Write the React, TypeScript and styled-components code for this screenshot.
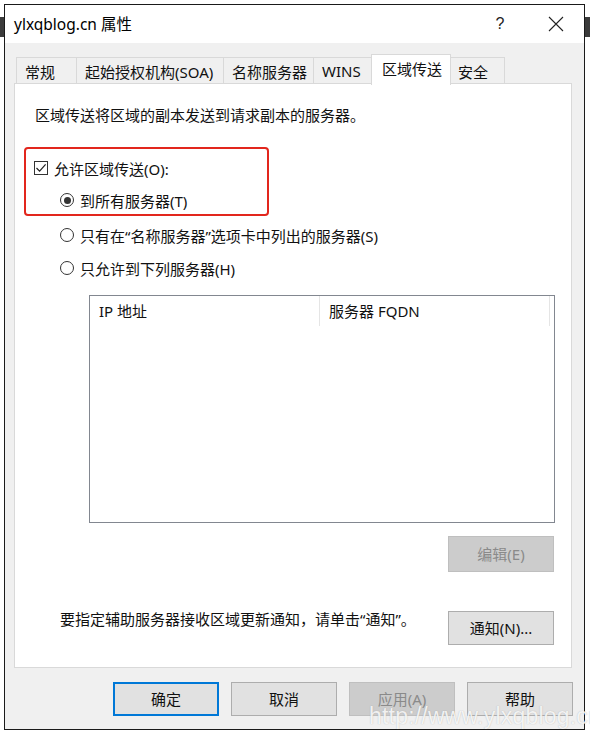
import styled, { createGlobalStyle } from "styled-components";

const GlobalStyle = createGlobalStyle`
    html, body {
        margin: 0;
        padding: 0;
    }
    body {
        width: 590px;
        height: 733px;
        overflow: hidden;
        font-family: "Noto Sans", "Noto Sans CJK SC", sans-serif;
        color: #111;
        background: linear-gradient(to bottom, #ffffff 17px, #3b3b3b 17px, #3b3b3b 37px, #ffffff 37px);
    }
`;

const tabs = [
    { label: "常规", width: 61 },
    { label: "起始授权机构(SOA)", width: 148 },
    { label: "名称服务器", width: 91 },
    { label: "WINS", width: 60 },
    { label: "区域传送", width: 80 },
    { label: "安全", width: 56 },
];
const activeTab = "区域传送";

const Dialog = () => {
    return (
        <Page>
            <GlobalStyle />
            <Window>
                <TitleBar>
                    <Title>ylxqblog.cn 属性</Title>
                    <CaptionButton>?</CaptionButton>
                    <CaptionButton>
                        <svg width="16" height="16" viewBox="0 0 16 16">
                            <path d="M1 1 L15 15 M15 1 L1 15" stroke="#222" strokeWidth="1.1" fill="none" />
                        </svg>
                    </CaptionButton>
                </TitleBar>
                <Body>
                    <TabStrip>
                        {tabs.map((t) => (
                            <Tab key={t.label} $active={t.label === activeTab} $width={t.width}>
                                {t.label}
                            </Tab>
                        ))}
                    </TabStrip>
                    <Panel>
                        <Intro>区域传送将区域的副本发送到请求副本的服务器。</Intro>
                        <Highlight>
                            <OptionRow>
                                <CheckBox>
                                    <svg width="12" height="12" viewBox="0 0 12 12">
                                        <path d="M1.5 6 L4.6 9.2 L10.6 2.4" stroke="#222" strokeWidth="1.2" fill="none" />
                                    </svg>
                                </CheckBox>
                                允许区域传送(O):
                            </OptionRow>
                            <OptionRow $indent={26} $top={12}>
                                <Radio $checked />
                                到所有服务器(T)
                            </OptionRow>
                        </Highlight>
                        <OptionRow $indent={45} $top={9}>
                            <Radio />
                            只有在“名称服务器”选项卡中列出的服务器(S)
                        </OptionRow>
                        <OptionRow $indent={45} $top={13}>
                            <Radio />
                            只允许到下列服务器(H)
                        </OptionRow>
                        <ListBox>
                            <ListHeader>
                                <HeaderCell>IP 地址</HeaderCell>
                                <HeaderCell>服务器 FQDN</HeaderCell>
                            </ListHeader>
                        </ListBox>
                        <EditRow>
                            <Button $disabled $height={36}>编辑(E)</Button>
                        </EditRow>
                        <NotifyRow>
                            <NotifyText>要指定辅助服务器接收区域更新通知，请单击“通知”。</NotifyText>
                            <Button $height={34}>通知(N)...</Button>
                        </NotifyRow>
                    </Panel>
                    <Footer>
                        <Button $primary $height={34}>确定</Button>
                        <Button $height={34}>取消</Button>
                        <Button $disabled $height={34}>应用(A)</Button>
                        <Button $height={34}>帮助</Button>
                    </Footer>
                </Body>
            </Window>
            <Watermark>http://www.ylxqblog.cn</Watermark>
        </Page>
    );
};

export const Page = styled.div`
    position: relative;
    width: 590px;
    height: 733px;
    overflow: hidden;
    padding: 4px 0 0 4px;
    box-sizing: border-box;
`;

export const Window = styled.div`
    width: 581px;
    height: 726px;
    box-sizing: border-box;
    border: 1px solid #1a1a1a;
    background: #f0f0f0;
    display: flex;
    flex-direction: column;
`;

export const TitleBar = styled.div`
    height: 38px;
    flex-shrink: 0;
    background: #ffffff;
    display: flex;
    align-items: center;
    padding: 0 5px 0 9px;
`;

export const Title = styled.div`
    flex: 1;
    font-size: 15.5px;
    color: #000;
    padding-bottom: 1px;
`;

export const CaptionButton = styled.div`
    width: 46px;
    height: 30px;
    margin-left: 10px;
    display: flex;
    align-items: center;
    justify-content: center;
    font-family: "Liberation Sans", sans-serif;
    font-size: 16px;
    color: #222;
`;

export const Body = styled.div`
    flex: 1;
    display: flex;
    flex-direction: column;
    padding: 11px 11px 0 9px;
`;

export const TabStrip = styled.div`
    display: flex;
    align-items: flex-end;
    height: 30px;
    padding-left: 2px;
    position: relative;
    z-index: 1;
`;

export const Tab = styled.div<{ $active?: boolean; $width: number }>`
    box-sizing: border-box;
    width: ${({ $width }) => $width}px;
    flex-shrink: 0;
    font-size: 15px;
    display: flex;
    align-items: center;
    padding: ${({ $active }) => ($active ? "0 0 3px 10px" : "1px 0 0 8px")};
    height: ${({ $active }) => ($active ? 31 : 27)}px;
    margin: ${({ $active }) => ($active ? "0 -1px -1px -2px" : "0 0 0 -1px")};
    background: ${({ $active }) => ($active ? "#ffffff" : "#f0f0f0")};
    border: 1px solid #d9d9d9;
    border-bottom: ${({ $active }) => ($active ? "none" : "1px solid #d9d9d9")};
    position: relative;
    z-index: ${({ $active }) => ($active ? 2 : 0)};
    white-space: nowrap;
    &:first-child {
        margin-left: 0;
    }
`;

export const Panel = styled.div`
    width: 558px;
    height: 585px;
    box-sizing: border-box;
    margin-top: -1px;
    background: #ffffff;
    border: 1px solid #d9d9d9;
    display: flex;
    flex-direction: column;
    font-size: 15px;
`;

export const Intro = styled.div`
    margin: 21px 0 0 20px;
    line-height: 20px;
`;

export const Highlight = styled.div`
    margin: 22px 0 0 9px;
    width: 245px;
    height: 69px;
    box-sizing: border-box;
    border: 2px solid #e2261d;
    border-radius: 4px;
    padding: 9px 0 0 8px;
`;

export const OptionRow = styled.div<{ $indent?: number; $top?: number }>`
    display: flex;
    align-items: center;
    gap: 6px;
    height: 20px;
    margin-left: ${({ $indent }) => $indent ?? 0}px;
    margin-top: ${({ $top }) => $top ?? 0}px;
    white-space: nowrap;
`;

export const CheckBox = styled.span`
    width: 14px;
    height: 14px;
    box-sizing: border-box;
    border: 1px solid #333;
    display: flex;
    align-items: center;
    justify-content: center;
`;

export const Radio = styled.span<{ $checked?: boolean }>`
    width: 14px;
    height: 14px;
    box-sizing: border-box;
    border: 1px solid #333;
    border-radius: 50%;
    display: flex;
    align-items: center;
    justify-content: center;
    &::after {
        content: "";
        width: 7px;
        height: 7px;
        border-radius: 50%;
        background: ${({ $checked }) => ($checked ? "#333" : "transparent")};
    }
`;

export const ListBox = styled.div`
    margin: 17px 0 0 74px;
    width: 466px;
    height: 228px;
    box-sizing: border-box;
    border: 1px solid #828790;
    background: #ffffff;
`;

export const ListHeader = styled.div`
    display: flex;
    height: 30px;
`;

export const HeaderCell = styled.div`
    width: 230px;
    box-sizing: border-box;
    border-right: 1px solid #e5e5e5;
    padding: 0 0 2px 9px;
    display: flex;
    align-items: center;
`;

export const EditRow = styled.div`
    display: flex;
    justify-content: flex-end;
    margin: 13px 17px 0 0;
`;

export const NotifyRow = styled.div`
    display: flex;
    align-items: flex-start;
    justify-content: space-between;
    margin: 39px 17px 0 45px;
`;

export const NotifyText = styled.div`
    line-height: 20px;
    margin-top: -2px;
`;

export const Button = styled.div<{ $primary?: boolean; $disabled?: boolean; $height: number }>`
    width: 106px;
    height: ${({ $height }) => $height}px;
    box-sizing: border-box;
    display: flex;
    align-items: center;
    justify-content: center;
    font-size: 15px;
    padding-bottom: 1px;
    background: ${({ $disabled }) => ($disabled ? "#cccccc" : "#e1e1e1")};
    color: ${({ $disabled }) => ($disabled ? "#8a8a8a" : "#111")};
    border: ${({ $primary, $disabled }) =>
        $primary ? "2px solid #0078d7" : $disabled ? "1px solid #bfbfbf" : "1px solid #adadad"};
`;

export const Footer = styled.div`
    display: flex;
    justify-content: flex-end;
    gap: 12px;
    margin-top: 14px;
`;

export const Watermark = styled.div`
    position: absolute;
    left: 369px;
    top: 703px;
    font-family: "Liberation Sans", sans-serif;
    font-size: 23px;
    color: rgba(255, 255, 255, 0.85);
    text-shadow: 0 0 1px rgba(120, 120, 120, 0.5);
    white-space: nowrap;
    letter-spacing: 0.2px;
`;

export default Dialog;
